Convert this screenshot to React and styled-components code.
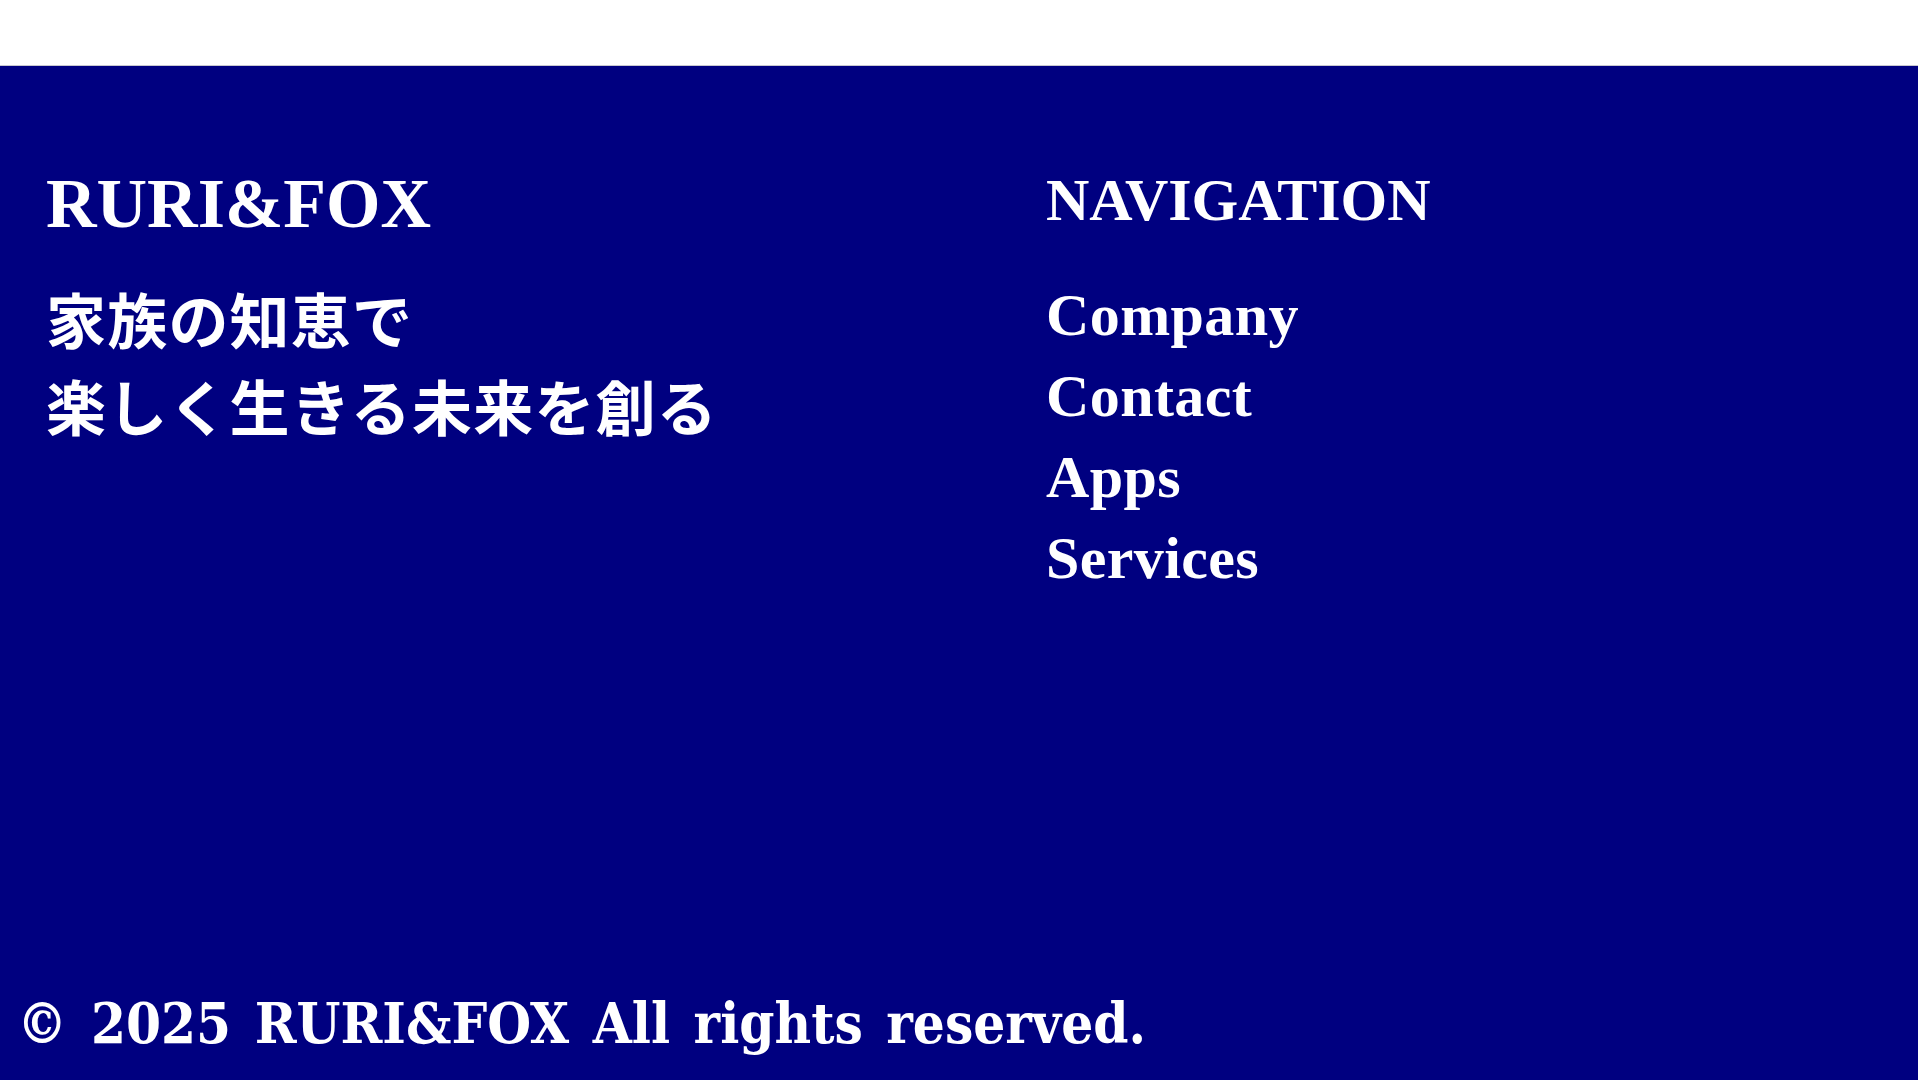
import styled, { createGlobalStyle } from "styled-components";

const GlobalStyle = createGlobalStyle`
  html, body {
    margin: 0;
    padding: 0;
    background: #fff;
  }
  * {
    box-sizing: border-box;
  }
`;

const Page = styled.div`
  display: flex;
  flex-direction: column;
  width: 100%;
`;

const TopBar = styled.header`
  height: 65px;
  background: #fff;
`;

const Footer = styled.footer`
  width: calc(100% - 2px);
  background: #000080;
  border-top: 1px solid #c8c8d0;
  color: #fff;
  padding-top: 96px;
`;

const Columns = styled.div`
  display: flex;
  min-height: 828px;
  padding-left: 46px;
`;

const BrandColumn = styled.div`
  width: 1000px;
  display: flex;
  flex-direction: column;
`;

const Brand = styled.h2`
  margin: 0;
  font-family: "Liberation Serif", "Times New Roman", serif;
  font-weight: 700;
  font-size: 70px;
  line-height: 84px;
`;

const Tagline = styled.p`
  margin: 28px 0 0;
  font-family: "Noto Sans CJK JP", "Noto Sans", sans-serif;
  font-weight: 700;
  font-size: 60px;
  line-height: 87px;
  letter-spacing: 1.2px;
`;

const NavColumn = styled.nav`
  display: flex;
  flex-direction: column;
  padding-top: 3px;
`;

const NavTitle = styled.h3`
  margin: 0 0 40px;
  font-family: "Liberation Serif", "Times New Roman", serif;
  font-weight: 700;
  font-size: 60px;
  line-height: 70px;
`;

const NavList = styled.ul`
  margin: 0;
  padding: 0;
  list-style: none;
`;

const NavLink = styled.a`
  display: block;
  color: #fff;
  text-decoration: none;
  font-family: "Liberation Serif", "Times New Roman", serif;
  font-weight: 700;
  font-size: 60px;
  line-height: 81px;
  letter-spacing: 0.4px;
`;

const Copyright = styled.p`
  margin: 0;
  padding: 0 0 24px 17px;
  font-family: "DejaVu Serif Condensed", "DejaVu Serif", serif;
  font-weight: 700;
  font-size: 56px;
  line-height: normal;
  word-spacing: 6px;
`;

const links = ["Company", "Contact", "Apps", "Services"];

const App = () => {
  return (
    <>
      <GlobalStyle />
      <Page>
        <TopBar />
        <Footer>
          <Columns>
            <BrandColumn>
              <Brand>RURI&amp;FOX</Brand>
              <Tagline>
                家族の知恵で
                <br />
                楽しく生きる未来を創る
              </Tagline>
            </BrandColumn>
            <NavColumn>
              <NavTitle>NAVIGATION</NavTitle>
              <NavList>
                {links.map((l) => (
                  <li key={l}>
                    <NavLink href="#">{l}</NavLink>
                  </li>
                ))}
              </NavList>
            </NavColumn>
          </Columns>
          <Copyright>© 2025 RURI&amp;FOX All rights reserved.</Copyright>
        </Footer>
      </Page>
    </>
  );
};

export default App;
